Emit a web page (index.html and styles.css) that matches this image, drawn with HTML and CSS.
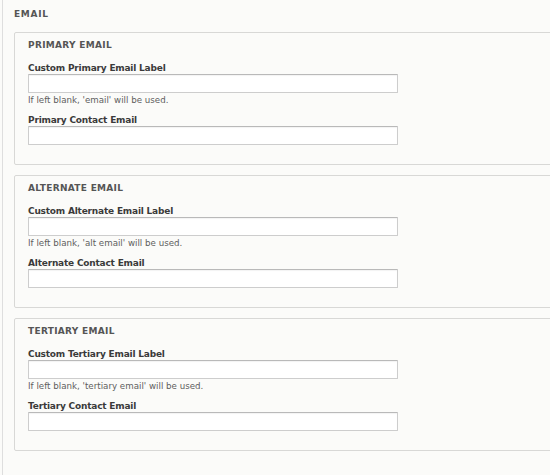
FILE: index.html
```html
<!DOCTYPE html>
<html lang="en">
<head>
    <meta charset="UTF-8">
    <title>Email Settings</title>
    <link rel="stylesheet" href="styles.css">
</head>
<body>
    <div class="outer">
        <div class="title">Email</div>

        <div class="group">
            <div class="legend">Primary Email</div>
            <label class="field-label" for="primary-label">Custom Primary Email Label</label>
            <input class="text-input" type="text" id="primary-label">
            <div class="help">If left blank, 'email' will be used.</div>
            <label class="field-label" for="primary-email">Primary Contact Email</label>
            <input class="text-input" type="text" id="primary-email">
        </div>

        <div class="group">
            <div class="legend">Alternate Email</div>
            <label class="field-label" for="alt-label">Custom Alternate Email Label</label>
            <input class="text-input" type="text" id="alt-label">
            <div class="help">If left blank, 'alt email' will be used.</div>
            <label class="field-label" for="alt-email">Alternate Contact Email</label>
            <input class="text-input" type="text" id="alt-email">
        </div>

        <div class="group">
            <div class="legend">Tertiary Email</div>
            <label class="field-label" for="tertiary-label">Custom Tertiary Email Label</label>
            <input class="text-input" type="text" id="tertiary-label">
            <div class="help">If left blank, 'tertiary email' will be used.</div>
            <label class="field-label" for="tertiary-email">Tertiary Contact Email</label>
            <input class="text-input" type="text" id="tertiary-email">
        </div>
    </div>
</body>
</html>
```

FILE: styles.css
```css
html, body {
    margin: 0;
    padding: 0;
    height: 100%;
    overflow: hidden;
    background-color: #fbfbf9;
}
body {
    font-family: "DejaVu Sans", Verdana, sans-serif;
    color: #333;
}
.outer {
    width: 620px;
    min-height: 100%;
    margin-left: 2px;
    padding: 7px 0 0 11px;
    border-left: 1px solid #dedede;
    box-sizing: border-box;
}
.title {
    font-size: 9px;
    font-weight: bold;
    line-height: 14px;
    letter-spacing: 0.7px;
    text-transform: uppercase;
    color: #555;
    margin-bottom: 11px;
}
.group {
    border: 1px solid #d8d8d6;
    border-radius: 2px;
    padding: 5px 13px 19px 13px;
    margin-bottom: 10px;
}
.legend {
    font-size: 9px;
    font-weight: bold;
    line-height: 14px;
    letter-spacing: 0.3px;
    text-transform: uppercase;
    color: #555;
    margin-bottom: 10px;
}
.field-label {
    display: block;
    font-size: 9px;
    font-weight: bold;
    line-height: 12px;
    letter-spacing: -0.2px;
    color: #3a3a3a;
}
.text-input {
    display: block;
    width: 370px;
    height: 19px;
    margin: 0;
    padding: 2px 4px;
    box-sizing: border-box;
    border: 1px solid #cdcdcd;
    border-top-color: #b9b9b9;
    border-radius: 1px;
    background-color: #fff;
    box-shadow: inset 0 1px 1px rgba(0, 0, 0, 0.05);
    font-family: inherit;
    font-size: 10px;
}
.help {
    font-size: 8.7px;
    line-height: 12px;
    color: #5e5e5e;
    margin: 1px 0 8px 0;
}
```
